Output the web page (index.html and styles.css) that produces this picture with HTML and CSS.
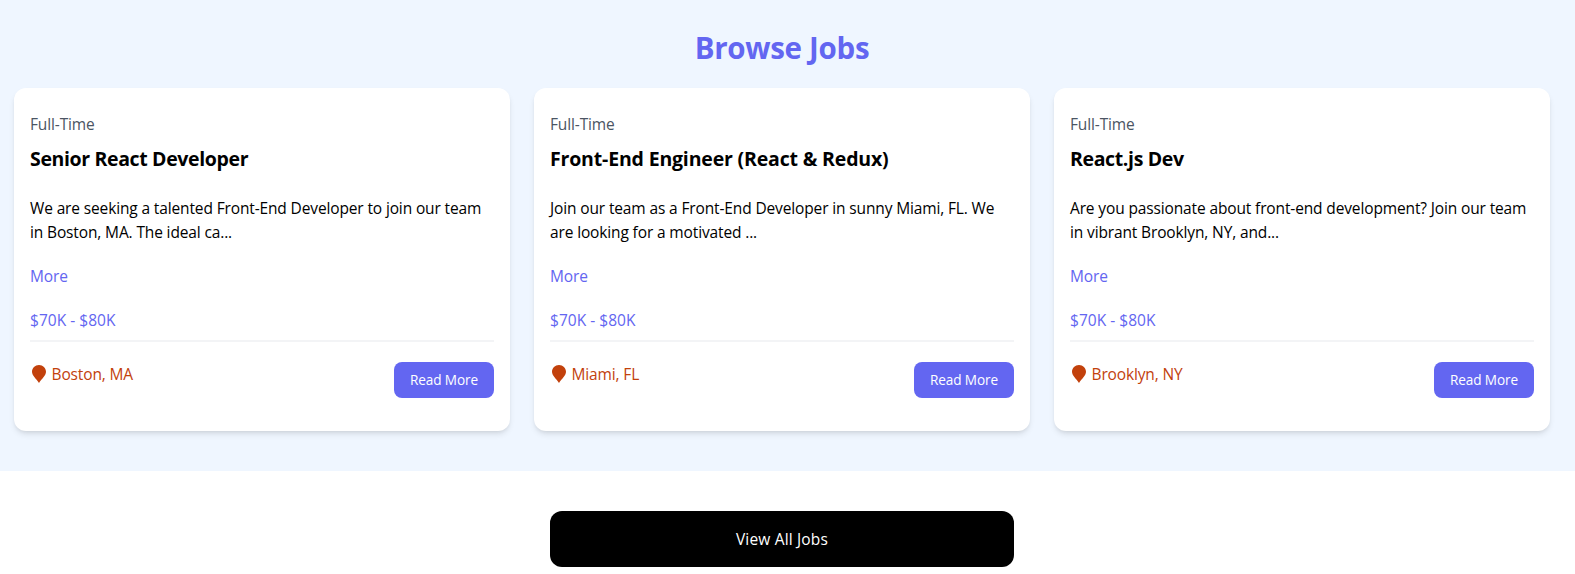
FILE: index.html
```html
<!DOCTYPE html>
<html lang="en">
<head>
<meta charset="utf-8">
<title>Browse Jobs</title>
<link rel="stylesheet" href="styles.css">
</head>
<body>
<section class="jobs">
  <h2 class="heading">Browse Jobs</h2>
  <div class="grid">
    <article class="card">
      <div class="type">Full-Time</div>
      <h3 class="title">Senior React Developer</h3>
      <p class="desc">We are seeking a talented Front-End Developer to join our team<br>in Boston, MA. The ideal ca...</p>
      <button class="more">More</button>
      <div class="salary">$70K - $80K</div>
      <div class="footer">
        <div class="location"><svg class="pin" viewBox="0 0 14 18"><path d="M7 0C3.1 0 0 3 0 6.8C0 10.5 4 13.5 7 18C10 13.5 14 10.5 14 6.8C14 3 10.9 0 7 0Z"/></svg>Boston, MA</div>
        <a class="read">Read More</a>
      </div>
    </article>
    <article class="card">
      <div class="type">Full-Time</div>
      <h3 class="title title-wide">Front-End Engineer (React &amp; Redux)</h3>
      <p class="desc">Join our team as a Front-End Developer in sunny Miami, FL. We<br>are looking for a motivated ...</p>
      <button class="more">More</button>
      <div class="salary">$70K - $80K</div>
      <div class="footer">
        <div class="location"><svg class="pin" viewBox="0 0 14 18"><path d="M7 0C3.1 0 0 3 0 6.8C0 10.5 4 13.5 7 18C10 13.5 14 10.5 14 6.8C14 3 10.9 0 7 0Z"/></svg>Miami, FL</div>
        <a class="read">Read More</a>
      </div>
    </article>
    <article class="card">
      <div class="type">Full-Time</div>
      <h3 class="title">React.js Dev</h3>
      <p class="desc">Are you passionate about front-end development? Join our team<br>in vibrant Brooklyn, NY, and...</p>
      <button class="more">More</button>
      <div class="salary">$70K - $80K</div>
      <div class="footer">
        <div class="location"><svg class="pin" viewBox="0 0 14 18"><path d="M7 0C3.1 0 0 3 0 6.8C0 10.5 4 13.5 7 18C10 13.5 14 10.5 14 6.8C14 3 10.9 0 7 0Z"/></svg>Brooklyn, NY</div>
        <a class="read">Read More</a>
      </div>
    </article>
  </div>
</section>
<section class="all">
  <a class="view-all">View All Jobs</a>
</section>
</body>
</html>
```

FILE: styles.css
```css
* { box-sizing: border-box; margin: 0; padding: 0; }

body {
  background: #fff;
  color: #000;
  font-family: "Open Sans", "Noto Sans", sans-serif;
  font-size: 15.5px;
  line-height: 24px;
  letter-spacing: -0.135px;
  overflow: hidden;
}

.jobs {
  height: 471px;
  padding: 30px 25px 40px 14px;
  background: #eff6ff;
}

.heading {
  margin-bottom: 22px;
  color: #6366f1;
  font-size: 29.5px;
  font-weight: 700;
  line-height: 36px;
  letter-spacing: -0.3px;
  text-align: center;
}

.grid {
  display: grid;
  grid-template-columns: repeat(3, 496px);
  gap: 24px;
}

.card {
  height: 343px;
  padding: 24px 16px;
  background: #fff;
  border-radius: 12px;
  box-shadow: 0 4px 6px -1px rgba(0, 0, 0, .1), 0 2px 4px -2px rgba(0, 0, 0, .1);
}

.type { margin-bottom: 9px; color: #4b5563; }

.title {
  margin-bottom: 23px;
  font-size: 19.5px;
  font-weight: 700;
  line-height: 28px;
  letter-spacing: -0.36px;
}

.title-wide { letter-spacing: -0.17px; }

.desc { margin-bottom: 20px; white-space: nowrap; }

.more {
  display: block;
  margin-bottom: 20px;
  border: 0;
  background: none;
  color: #6366f1;
  font: inherit;
  letter-spacing: inherit;
}

.salary {
  padding-bottom: 8px;
  border-bottom: 2px solid #f3f4f6;
  color: #6366f1;
  letter-spacing: 0.02px;
}

.footer {
  display: flex;
  justify-content: space-between;
  align-items: flex-start;
  padding-top: 20px;
}

.location { display: flex; padding-left: 2px; color: #c2410c; }

.pin { width: 14px; height: 18px; margin: 3px 5.5px 0 0; fill: #c2410c; }

.read {
  width: 100px;
  height: 36px;
  border-radius: 8px;
  background: #6366f1;
  color: #fff;
  font-size: 13.6px;
  line-height: 36px;
  text-align: center;
}

.all { padding: 40px 25px 0 14px; }

.view-all {
  display: block;
  width: 464px;
  height: 56px;
  margin: 0 auto;
  border-radius: 12px;
  background: #000;
  color: #fff;
  line-height: 57px;
  letter-spacing: 0.17px;
  text-align: center;
}
```
